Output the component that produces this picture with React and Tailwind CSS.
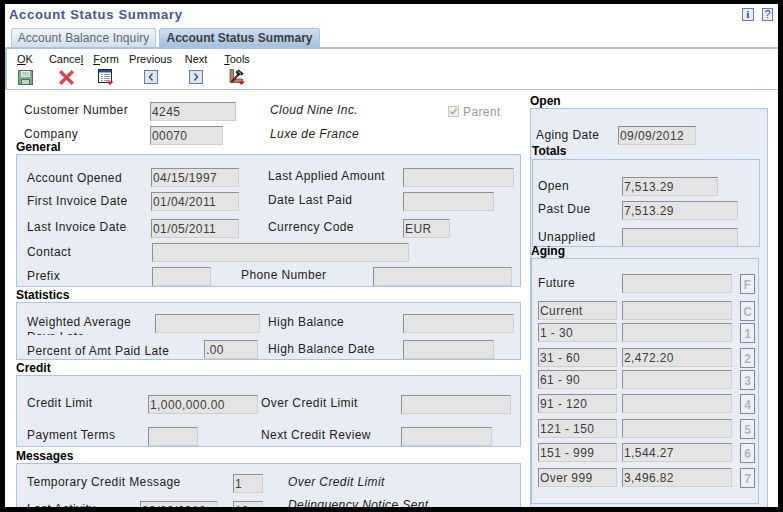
import React from "react";

const Label = ({ className = "", children }) => (
  <div className={`h-[19px] shrink-0 leading-[19px] whitespace-nowrap ${className}`}>{children}</div>
);

// read-only JDE style field
const Box = ({ className = "", children }) => (
  <div
    className={`h-[19px] shrink-0 overflow-hidden whitespace-nowrap border border-t-[#8f8f8f] border-l-[#8f8f8f] border-r-[#cfcfcf] border-b-[#cfcfcf] bg-[#e4e4e4] pl-[1px] text-[#3c3c3c] leading-[19px] ${className}`}
  >
    {children}
  </div>
);

const Heading = ({ className = "", children }) => (
  <div className={`h-[12px] text-[12px] font-bold leading-[12px] tracking-normal text-black ${className}`}>{children}</div>
);

const Panel = ({ className = "", children }) => (
  <div className={`overflow-hidden border border-[#a9c4de] bg-[#e8edf5] ${className}`}>{children}</div>
);

const Row = ({ className = "", children }) => <div className={`flex h-[19px] items-start ${className}`}>{children}</div>;

const KeyBtn = ({ className = "", children }) => (
  <div
    className={`ml-[8px] flex h-[20px] w-[15px] shrink-0 items-end justify-center border border-[#7f88a8] bg-[#eef1f8] text-[12px] font-bold leading-[15px] tracking-normal text-[#b4b4b4] ${className}`}
  >
    {children}
  </div>
);

const SaveIcon = () => (
  <svg width="15" height="15" viewBox="0 0 15 15">
    <rect x="0.5" y="0.5" width="14" height="14" fill="#74b184" stroke="#566f5e" />
    <rect x="3" y="1" width="9" height="6" fill="#e3ebe5" />
    <path d="M4 3h7M4 5h7" stroke="#9fb5a6" />
    <rect x="3.5" y="9.5" width="8" height="5" fill="#c3d0c7" stroke="#566f5e" />
  </svg>
);

const CancelIcon = () => (
  <svg width="15" height="15" viewBox="0 0 15 15">
    <path d="M1.2 1.2l12.6 12.6M13.8 1.2L1.2 13.8" stroke="#d2484c" strokeWidth="3.4" />
  </svg>
);

const FormIcon = () => (
  <svg width="17" height="16" viewBox="0 0 17 16">
    <rect x="0.5" y="0.5" width="13" height="13" fill="#fff" stroke="#20242e" />
    <rect x="1" y="1" width="12" height="2.5" fill="#1d4f9c" />
    <path d="M3 5.5h2M6 5.5h6M3 7.5h2M6 7.5h6M3 9.5h2M6 9.5h6M3 11.5h2M6 11.5h6" stroke="#8c94a4" />
    <path d="M8.5 12.5h7l-3.5 3.5z" fill="#e0101c" />
  </svg>
);

const PrevIcon = () => (
  <svg width="14" height="14" viewBox="0 0 14 14">
    <rect x="0.5" y="0.5" width="13" height="13" fill="#dde6f3" stroke="#6d7a9f" />
    <path d="M8.5 3.5L5.5 7l3 3.5" fill="none" stroke="#33558a" strokeWidth="1.4" />
  </svg>
);

const NextIcon = () => (
  <svg width="14" height="14" viewBox="0 0 14 14">
    <rect x="0.5" y="0.5" width="13" height="13" fill="#dde6f3" stroke="#6d7a9f" />
    <path d="M5.5 3.5L8.5 7l-3 3.5" fill="none" stroke="#33558a" strokeWidth="1.4" />
  </svg>
);

const ToolsIcon = () => (
  <svg width="17" height="16" viewBox="0 0 17 16">
    <path d="M1 0.5h3.5v9.5h9v3.5H1z" fill="#a58c70" stroke="#4c3c30" strokeWidth="0.7" />
    <path d="M2.5 13L10 5" stroke="#8c1218" strokeWidth="2.2" />
    <path d="M6.5 3l3-2.5 5 4-1.5 2-2-1-1.5 1.5z" fill="#1c1c24" />
    <path d="M9 2.5l3 2.2" stroke="#dfe4ee" strokeWidth="0.8" />
    <path d="M9 12.5h7l-3.5 3.5z" fill="#e0101c" />
  </svg>
);

const tools = [
  { w: "w-[36px]", label: <><span className="underline">O</span>K</>, icon: <SaveIcon /> },
  { w: "w-[46px]", label: <>Cance<span className="underline">l</span></>, icon: <CancelIcon /> },
  { w: "w-[34px]", label: <><span className="underline">F</span>orm</>, icon: <FormIcon /> },
  { w: "w-[55px]", label: <>Previous</>, icon: <PrevIcon /> },
  { w: "w-[36px]", label: <>Next</>, icon: <NextIcon /> },
  { w: "w-[46px]", label: <><span className="underline">T</span>ools</>, icon: <ToolsIcon /> },
];

const aging = [
  { name: "Current", amount: "", key: "C", gap: "mt-[8px]" },
  { name: "1 - 30", amount: "", key: "1", gap: "mt-[3px]" },
  { name: "31 - 60", amount: "2,472.20", key: "2", gap: "mt-[6px]" },
  { name: "61 - 90", amount: "", key: "3", gap: "mt-[3px]" },
  { name: "91 - 120", amount: "", key: "4", gap: "mt-[5px]" },
  { name: "121 - 150", amount: "", key: "5", gap: "mt-[6px]" },
  { name: "151 - 999", amount: "1,544.27", key: "6", gap: "mt-[5px]" },
  { name: "Over 999", amount: "3,496.82", key: "7", gap: "mt-[6px]" },
];

export default function App() {
  return (
    <div className="h-[512px] w-[783px] overflow-hidden bg-black pl-[5px] pt-[4px] font-['Liberation_Sans',Arial,sans-serif] text-[12px] tracking-[0.4px] text-[#222]">
      <div className="h-[503px] w-[773px] overflow-hidden bg-white">
        {/* title */}
        <div className="flex h-[24px] items-center pl-[4px] pr-[5px]">
          <div className="flex-1 pb-[3px] text-[13px] font-bold tracking-[0.7px] text-[#47578a]">Account Status Summary</div>
          <div className="mb-[4px] flex h-[13px] w-[12px] items-center justify-center border border-[#6d7aa8] bg-[#eaeefa] font-['Liberation_Serif',serif] text-[11px] font-bold text-[#2f4a8a]">i</div>
          <div className="mb-[4px] ml-[8px] flex h-[13px] w-[11px] items-center justify-center border border-[#6d7aa8] bg-[#eaeefa] text-[11px] tracking-normal text-[#2f4a8a]">?</div>
        </div>

        {/* tabs */}
        <div className="flex h-[19px] gap-[3px] pl-[6px] tracking-normal">
          <div className="flex w-[145px] items-center justify-center rounded-t-[3px] border border-b-0 border-[#b9c9d8] bg-gradient-to-b from-[#f2f5f8] to-[#d3deea] text-[12px] tracking-[0.1px] text-[#56697c]">
            Account Balance Inquiry
          </div>
          <div className="flex w-[161px] items-center justify-center rounded-t-[3px] border border-b-0 border-[#a9c4de] bg-gradient-to-b from-[#cfe0f2] to-[#a3c0de] text-[12px] font-bold text-[#3a3d42]">
            Account Status Summary
          </div>
        </div>

        {/* toolbar */}
        <div className="flex h-[42px] border-l-2 border-t-2 border-[#a9c4de]">
          {tools.map((t, i) => (
            <div key={i} className={`flex flex-col items-center ${t.w}`}>
              <div className="mt-[2px] h-[16px] text-[11px] leading-[16px] tracking-normal text-[#111]">{t.label}</div>
              <div className="mt-[2px] flex h-[16px] items-center justify-center">{t.icon}</div>
            </div>
          ))}
        </div>
        <div className="h-[1px] bg-[#b0c4dc]" />

        <div className="flex">
          {/* left column */}
          <div className="w-[525px] shrink-0 pl-[11px]">
            <Row className="mt-[12px] pl-[8px]">
              <Label className="-mt-[1px] w-[126px]">Customer Number</Label>
              <Box className="w-[86px]">4245</Box>
              <Label className="-mt-[1px] ml-[34px] w-[178px] italic">Cloud Nine Inc.</Label>
              <div className="mt-[4px] flex h-[11px] w-[11px] shrink-0 items-center justify-center border border-[#c4c8c0] bg-[#f1f1ea]">
                <svg width="9" height="9" viewBox="0 0 9 9">
                  <path d="M1.5 4.5l2 2.2L7.5 2" fill="none" stroke="#a8aca4" strokeWidth="1.6" />
                </svg>
              </div>
              <Label className="ml-[4px] mt-[1px] text-[#9a9a9a]">Parent</Label>
            </Row>
            <Row className="mt-[5px] pl-[8px]">
              <Label className="-mt-[1px] w-[126px]">Company</Label>
              <Box className="w-[73px]">00070</Box>
              <Label className="-mt-[1px] ml-[47px] italic">Luxe de France</Label>
            </Row>

            <Heading className="-mt-[4px] mb-[1px]">General</Heading>
            <Panel className="h-[133px] w-[505px] pl-[10px] pt-[13px]">
              <Row>
                <Label className="mt-[1px] w-[124px]">Account Opened</Label>
                <Box className="w-[88px]">04/15/1997</Box>
                <Label className="-mt-[1px] ml-[29px] w-[135px]">Last Applied Amount</Label>
                <Box className="w-[111px]" />
              </Row>
              <Row className="mt-[5px]">
                <Label className="w-[124px]">First Invoice Date</Label>
                <Box className="w-[88px]">01/04/2011</Box>
                <Label className="-mt-[1px] ml-[29px] w-[135px]">Date Last Paid</Label>
                <Box className="w-[91px]" />
              </Row>
              <Row className="mt-[8px]">
                <Label className="-mt-[1px] w-[124px]">Last Invoice Date</Label>
                <Box className="w-[88px]">01/05/2011</Box>
                <Label className="-mt-[1px] ml-[29px] w-[135px]">Currency Code</Label>
                <Box className="w-[47px]">EUR</Box>
              </Row>
              <Row className="mt-[5px]">
                <Label className="w-[125px]">Contact</Label>
                <Box className="w-[257px]" />
              </Row>
              <Row className="mt-[5px]">
                <Label className="w-[125px]">Prefix</Label>
                <Box className="w-[59px]" />
                <Label className="-mt-[1px] ml-[30px] w-[132px]">Phone Number</Label>
                <Box className="w-[139px]" />
              </Row>
            </Panel>

            <Heading className="mb-[1px] mt-[2px]">Statistics</Heading>
            <Panel className="h-[58px] w-[505px] pl-[10px] pt-[11px]">
              <Row>
                <div className="mt-[1px] h-[20px] w-[128px] shrink-0 overflow-hidden leading-[15px]">
                  Weighted Average
                  <br />
                  Days Late
                </div>
                <Box className="w-[105px]" />
                <Label className="-mt-[1px] ml-[8px] w-[135px]">High Balance</Label>
                <Box className="w-[111px]" />
              </Row>
              <Row className="mt-[7px]">
                <Label className="mt-[2px] w-[177px]">Percent of Amt Paid Late</Label>
                <Box className="w-[54px] text-left">.00</Box>
                <Label className="ml-[10px] w-[135px]">High Balance Date</Label>
                <Box className="w-[91px]" />
              </Row>
            </Panel>

            <Heading className="mb-[1px] mt-[2px]">Credit</Heading>
            <Panel className="h-[72px] w-[505px] pl-[10px] pt-[19px]">
              <Row>
                <Label className="-mt-[1px] w-[121px]">Credit Limit</Label>
                <Box className="w-[110px]">1,000,000.00</Box>
                <Label className="-mt-[1px] ml-[3px] w-[140px]">Over Credit Limit</Label>
                <Box className="w-[110px]" />
              </Row>
              <Row className="mt-[13px]">
                <Label className="-mt-[1px] w-[121px]">Payment Terms</Label>
                <Box className="w-[50px]" />
                <Label className="-mt-[1px] ml-[63px] w-[140px]">Next Credit Review</Label>
                <Box className="w-[91px]" />
              </Row>
            </Panel>

            <Heading className="mb-[1px] mt-[3px]">Messages</Heading>
            <Panel className="h-[60px] w-[505px] pl-[10px] pt-[10px]">
              <Row>
                <Label className="-mt-[1px] w-[206px]">Temporary Credit Message</Label>
                <Box className="w-[30px]">1</Box>
                <Label className="-mt-[1px] ml-[25px] italic">Over Credit Limit</Label>
              </Row>
              <Row className="mt-[8px]">
                <Label className="-mt-[1px] w-[113px]">Last Activity</Label>
                <Box className="w-[78px]">09/09/2012</Box>
                <Box className="ml-[15px] w-[30px]">10</Box>
                <Label className="-mt-[5px] ml-[25px] italic">Delinquency Notice Sent</Label>
              </Row>
            </Panel>
          </div>

          {/* right column */}
          <div className="w-[238px] shrink-0">
            <Heading className="mb-[1px] mt-[5px]">Open</Heading>
            <Panel className="h-[410px]">
              <Row className="mt-[17px] pl-[5px]">
                <Label className="w-[82px]">Aging Date</Label>
                <Box className="w-[78px]">09/09/2012</Box>
              </Row>
              <Heading className="pl-[1px]">Totals</Heading>
              <Panel className="ml-[1px] mt-[2px] h-[88px] w-[228px] pl-[5px] pt-[17px]">
                <Row>
                  <Label className="w-[84px]">Open</Label>
                  <Box className="w-[96px]">7,513.29</Box>
                </Row>
                <Row className="mt-[5px]">
                  <Label className="-mt-[1px] w-[84px]">Past Due</Label>
                  <Box className="w-[116px]">7,513.29</Box>
                </Row>
                <Row className="mt-[8px]">
                  <Label className="w-[84px]">Unapplied</Label>
                  <Box className="w-[116px]" />
                </Row>
              </Panel>
              <Heading className="-mt-[2px] mb-[1px]">Aging</Heading>
              <Panel className="h-[246px] w-[228px] pl-[6px] pt-[15px]">
                <Row>
                  <Label className="w-[84px]">Future</Label>
                  <Box className="w-[110px]" />
                  <KeyBtn>F</KeyBtn>
                </Row>
                {aging.map((a) => (
                  <Row key={a.key} className={a.gap}>
                    <Box className="w-[79px]">{a.name}</Box>
                    <Box className="ml-[5px] w-[110px]">{a.amount}</Box>
                    <KeyBtn>{a.key}</KeyBtn>
                  </Row>
                ))}
              </Panel>
            </Panel>
          </div>
        </div>
      </div>
    </div>
  );
}
